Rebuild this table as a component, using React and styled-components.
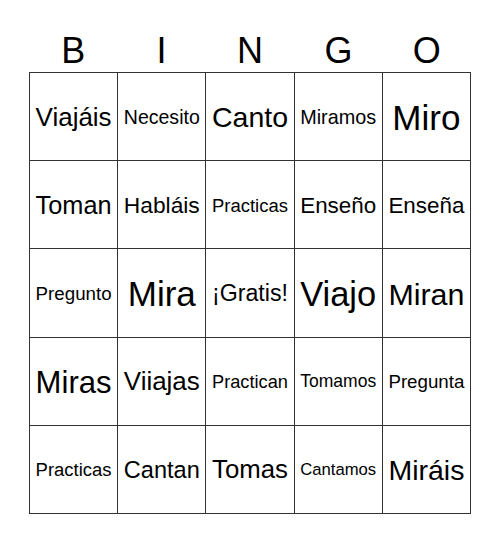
import React, { useMemo } from "react";
import styled, { createGlobalStyle } from "styled-components";

const FONT = '"Liberation Sans", Arial, sans-serif';

const words = [
    "Viajáis", "Necesito", "Canto", "Miramos", "Miro",
    "Toman", "Habláis", "Practicas", "Enseño", "Enseña",
    "Pregunto", "Mira", "¡Gratis!", "Viajo", "Miran",
    "Miras", "Viiajas", "Practican", "Tomamos", "Pregunta",
    "Practicas", "Cantan", "Tomas", "Cantamos", "Miráis",
];

const Global = createGlobalStyle`
  html, body { margin: 0; padding: 0; background: #fff; }
  body { font-family: ${FONT}; color: #000; }
`;

const Card = styled.div`
  width: 442px;
  margin: 0 auto;
`;

const Header = styled.div`
  display: grid;
  grid-template-columns: repeat(5, 1fr);
  padding-top: 33px;
  height: 35px;
  margin-bottom: 4px;
`;

const Letter = styled.div`
  text-align: center;
  font-size: 36px;
  line-height: 36px;
`;

const Board = styled.div`
  display: grid;
  grid-template-columns: repeat(5, 1fr);
  grid-template-rows: repeat(5, 1fr);
  height: 442px;
  box-sizing: border-box;
  border-top: 1px solid #333;
  border-left: 1px solid #333;
`;

const Cell = styled.div`
  display: flex;
  align-items: center;
  justify-content: center;
  padding-top: 2px;
  border-right: 1px solid #333;
  border-bottom: 1px solid #333;
  white-space: nowrap;
  overflow: hidden;
  line-height: 1;
`;

function fitSizes(list) {
    const ctx = document.createElement("canvas").getContext("2d");
    ctx.font = `100px ${FONT}`;
    return list.map((w) => {
        const em = ctx.measureText(w).width / 100;
        return Math.min(35, 76 / em);
    });
}

export default function App() {
    const sizes = useMemo(() => fitSizes(words), []);
    return (
        <>
            <Global />
            <Card>
                <Header>
                    {"BINGO".split("").map((l) => (
                        <Letter key={l}>{l}</Letter>
                    ))}
                </Header>
                <Board>
                    {words.map((w, i) => (
                        <Cell key={i} style={{ fontSize: sizes[i] }}>
                            {w}
                        </Cell>
                    ))}
                </Board>
            </Card>
        </>
    );
}
